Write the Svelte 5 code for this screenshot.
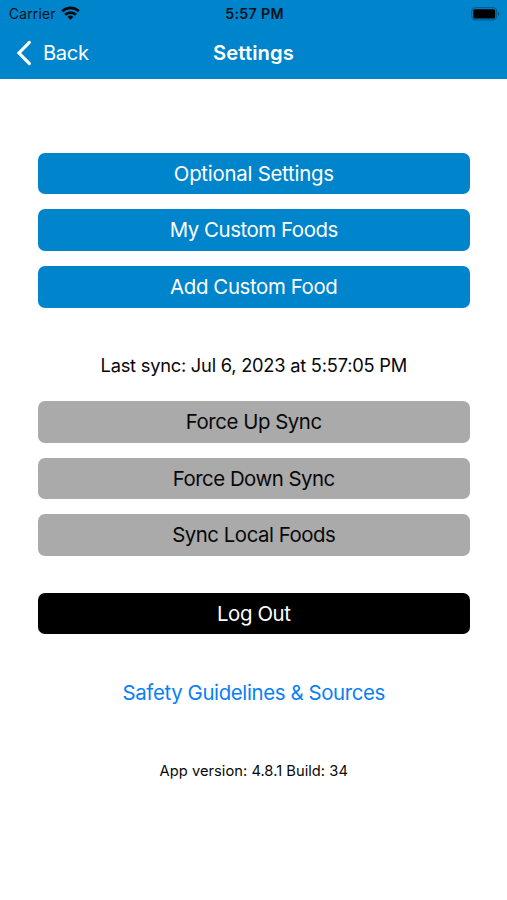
<script>
  const foods = [['Optional Settings', -0.25], ['My Custom Foods', -0.43], ['Add Custom Food', -0.38]];
  const syncs = [['Force Up Sync', -0.45], ['Force Down Sync', -0.49], ['Sync Local Foods', -0.47]];
</script>

<div class="screen">
  <header>
    <div class="status">
      <div class="carrier">
        <span>Carrier</span>
        <svg width="19" height="14" viewBox="0 0 19 14" fill="none" stroke="#020a10" stroke-width="2.8">
          <path d="M1.2 5.3a11.7 11.7 0 0 1 16.6 0M4.1 8.8a7.6 7.6 0 0 1 10.8 0" />
          <path d="M9.5 13.8 6.6 10.9a4.1 4.1 0 0 1 5.8 0z" fill="#020a10" stroke="none" />
        </svg>
      </div>
      <b>5:57 PM</b>
      <svg class="battery" width="30" height="14" viewBox="0 0 30 14">
        <rect x=".7" y=".7" width="25" height="12.2" rx="3.5" fill="none" stroke="#04547f" />
        <rect x="2.2" y="2.2" width="22" height="9.2" rx="1.6" fill="#000" />
        <path d="M27 4.7q3 2.1 0 4.2z" fill="#04547f" />
      </svg>
    </div>
    <nav>
      <button class="back">
        <svg width="16" height="26" viewBox="0 0 16 26"><path d="M13.4 2.4 3 13l10.4 10.6" fill="none" stroke="#fff" stroke-width="3.2" stroke-linecap="round" /></svg>
        <span>Back</span>
      </button>
      <h1>Settings</h1>
    </nav>
  </header>
  <main>
    <section>{#each foods as [label, tracking]}<button class="action" style:letter-spacing="{tracking}px">{label}</button>{/each}</section>
    <p class="last">Last sync: Jul 6, 2023 at 5:57:05 PM</p>
    <section>{#each syncs as [label, tracking]}<button class="action gray" style:letter-spacing="{tracking}px">{label}</button>{/each}</section>
    <button class="action black">Log Out</button>
    <a href="#safety">Safety Guidelines &amp; Sources</a>
    <p class="version">App version: 4.8.1 Build: 34</p>
  </main>
</div>

<style>
  :global(body) { margin: 0; background: #fff; }
  .screen { width: 507px; height: 900px; overflow: hidden; background: #fff; font-family: Inter, sans-serif; }
  button { border: 0; padding: 0; font: inherit; }
  header { height: 79.3px; background: #0084cb; color: #fff; }
  .status { display: grid; grid-template-columns: 1fr auto 1fr; align-items: center; height: 27px; padding: 0 6px 0 9px; color: #03121b; font-size: 13.8px; }
  .status b { font-weight: 600; font-size: 14.2px; letter-spacing: .32px; margin-left: -1px; }
  .carrier { display: flex; align-items: center; gap: 5px; }
  .carrier span { letter-spacing: .2px; }
  .carrier svg { margin-top: -2px; }
  .battery { justify-self: end; }
  nav { display: grid; grid-template-columns: 1fr auto 1fr; align-items: center; height: 51px; }
  .back { display: flex; align-items: center; gap: 11px; margin-left: 16px; background: none; color: #fff; font-size: 20.2px; letter-spacing: -.35px; }
  h1 { margin: 0; font-size: 20.2px; font-weight: 600; letter-spacing: .1px; }
  main { display: flex; flex-direction: column; padding: 73.5px 37px 0 37.5px; text-align: center; }
  section { display: flex; flex-direction: column; gap: 15px; }
  .action { width: 100%; height: 41.6px; border-radius: 7px; background: #0084cb; color: #fff; font-size: 20.4px; line-height: 42px; }
  .gray { background: #aaa; color: #080808; }
  .black { margin-top: 36.8px; background: #000; letter-spacing: -.4px; }
  p { margin: 0; color: #080808; }
  .last { height: 24px; margin: 45.5px 0 23.9px; font-size: 18.3px; line-height: 24px; letter-spacing: -.24px; }
  a { height: 28px; margin-top: 44.5px; color: #087ff5; font-size: 20.4px; line-height: 28px; text-decoration: none; letter-spacing: -.37px; }
  .version { height: 20px; margin-top: 54px; font-size: 14.7px; line-height: 20px; letter-spacing: .03px; }
</style>
